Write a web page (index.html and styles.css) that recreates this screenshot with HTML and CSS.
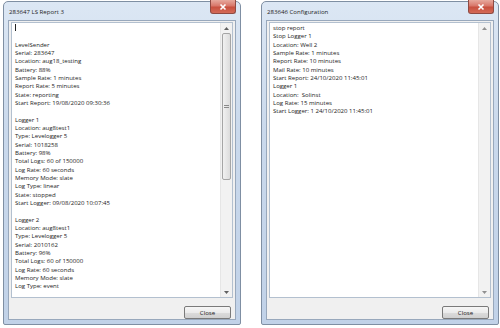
FILE: index.html
```html
<!DOCTYPE html>
<html>
<head>
<meta charset="utf-8">
<link rel="stylesheet" href="styles.css">
</head>
<body>
<div class="desk">
  <div class="win">
    <div class="titlebar">
      <span class="title">283647 LS Report 3</span>
      <span class="close"><svg width="10" height="8" viewBox="0 0 10 8"><path d="M2.5 1.5 L7.5 6.5 M7.5 1.5 L2.5 6.5" stroke="#fff" stroke-width="1.6" fill="none"/></svg></span>
    </div>
    <div class="client">
      <div class="textarea">
        <div class="text"><span class="caret"></span>

LevelSender
Serial: 283647
Location: aug18_testing
Battery: 88%
Sample Rate: 1 minutes
Report Rate: 5 minutes
State: reporting
Start Report: 19/08/2020 09:30:36

Logger 1
Location: aug8test1
Type: Levelogger 5
Serial: 1018258
Battery: 98%
Total Logs: 60 of 150000
Log Rate: 60 seconds
Memory Mode: slate
Log Type: linear
State: stopped
Start Logger: 09/08/2020 10:07:45

Logger 2
Location: aug8test1
Type: Levelogger 5
Serial: 2010162
Battery: 96%
Total Logs: 60 of 150000
Log Rate: 60 seconds
Memory Mode: slate
Log Type: event</div>
        <div class="sb">
          <span class="arrow"><svg width="5" height="3" viewBox="0 0 5 3"><polygon points="0,3 2.5,0 5,3" fill="#606060"/></svg></span>
          <div class="track">
            <div class="thumb"><span class="grip"></span></div>
          </div>
          <span class="arrow"><svg width="5" height="3" viewBox="0 0 5 3"><polygon points="0,0 2.5,3 5,0" fill="#606060"/></svg></span>
        </div>
      </div>
      <div class="footer"><button class="btn">Close</button></div>
    </div>
  </div>

  <div class="win">
    <div class="titlebar">
      <span class="title">283646 Configuration</span>
      <span class="close"><svg width="10" height="8" viewBox="0 0 10 8"><path d="M2.5 1.5 L7.5 6.5 M7.5 1.5 L2.5 6.5" stroke="#fff" stroke-width="1.6" fill="none"/></svg></span>
    </div>
    <div class="client">
      <div class="textarea">
        <div class="text">stop report
Stop Logger 1
Location: Well 2
Sample Rate: 1 minutes
Report Rate: 10 minutes
Mail Rate: 10 minutes
Start Report: 24/10/2020 11:45:01
Logger 1
Location:  Solinst
Log Rate: 15 minutes
Start Logger: 1 24/10/2020 11:45:01</div>
        <div class="sb">
          <span class="arrow"><svg width="5" height="3" viewBox="0 0 5 3"><polygon points="0,3 2.5,0 5,3" fill="#909090"/></svg></span>
          <div class="track"></div>
          <span class="arrow"><svg width="5" height="3" viewBox="0 0 5 3"><polygon points="0,0 2.5,3 5,0" fill="#909090"/></svg></span>
        </div>
      </div>
      <div class="footer"><button class="btn">Close</button></div>
    </div>
  </div>
</div>
</body>
</html>
```

FILE: styles.css
```css
html, body {
  margin: 0;
  padding: 0;
  background: #fff;
}
body {
  width: 500px;
  height: 328px;
  overflow: hidden;
  font-family: "Open Sans", "Noto Sans", sans-serif;
  color: #1c1c1c;
}
.desk {
  display: flex;
  gap: 20px;
  padding: 1px 0 0 3px;
}
.win {
  width: 238px;
  height: 324px;
  box-sizing: border-box;
  border: 1px solid #7f8fa3;
  border-radius: 5px 5px 2px 2px;
  background: linear-gradient(180deg, #dce7f4 0%, #cad9ec 40%, #c1d2e8 100%);
  padding: 0 4px 4px;
  display: flex;
  flex-direction: column;
}
.titlebar {
  height: 19px;
  display: flex;
  align-items: flex-start;
  justify-content: space-between;
}
.title {
  font-size: 6.1px;
  line-height: 9px;
  margin-top: 5px;
  padding-left: 1px;
  color: #1e1e1e;
}
.close {
  width: 26px;
  height: 14px;
  margin-top: -2px;
  box-sizing: border-box;
  border: 1px solid #8f4a42;
  border-top: none;
  border-radius: 0 0 3px 3px;
  background: linear-gradient(180deg, #e7a99d 0%, #d8776a 45%, #c8503f 55%, #d46b58 100%);
  display: flex;
  align-items: center;
  justify-content: center;
}
.client {
  flex: 1;
  background: #f0f0f0;
  border: 1px solid #98a8bc;
  padding: 1px 2px 0;
  display: flex;
  flex-direction: column;
}
.textarea {
  height: 276px;
  box-sizing: border-box;
  border: 1px solid #b3c0cf;
  background: #fff;
  display: flex;
}
.text {
  flex: 1;
  padding: 1px 0 0 3px;
  font-size: 6.05px;
  line-height: 8.33px;
  white-space: pre;
  overflow: hidden;
}
.caret {
  display: inline-block;
  width: 1px;
  height: 7px;
  background: #222;
  vertical-align: -1px;
}
.sb {
  width: 11px;
  background: #f2f2f2;
  border-left: 1px solid #e6e6e6;
  display: flex;
  flex-direction: column;
}
.arrow {
  height: 10px;
  display: flex;
  align-items: center;
  justify-content: center;
}
.track {
  flex: 1;
  padding: 0 1px;
}
.thumb {
  height: 147px;
  box-sizing: border-box;
  border: 1px solid #a5a5a5;
  border-radius: 2px;
  background: linear-gradient(90deg, #f1f1f1, #dcdcdc);
  display: flex;
  align-items: center;
  justify-content: center;
}
.grip {
  width: 5px;
  height: 4px;
  background: repeating-linear-gradient(180deg, #8a8a8a 0 1px, transparent 1px 2px);
}
.footer {
  flex: 1;
  display: flex;
  justify-content: flex-end;
  align-items: flex-start;
  padding: 8px 2px 0 0;
}
.btn {
  width: 47px;
  height: 13px;
  margin: 0;
  padding: 0;
  box-sizing: border-box;
  border: 1px solid #7a7a7a;
  border-radius: 2px;
  background: linear-gradient(180deg, #f6f6f6 0%, #ebebeb 50%, #dcdcdc 51%, #d0d0d0 100%);
  font-family: "Open Sans", "Noto Sans", sans-serif;
  font-size: 6.1px;
  line-height: 11px;
  color: #222;
}
```
